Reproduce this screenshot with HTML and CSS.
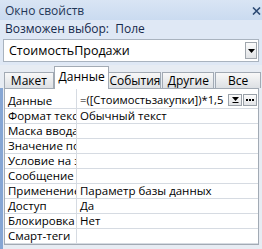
FILE: index.html
```html
<!DOCTYPE html>
<html lang="ru">
<head>
    <meta charset="UTF-8">
    <title>Окно свойств</title>
    <link rel="stylesheet" href="styles.css">
</head>
<body>
    <div class="titlebar">
        <span>Окно свойств</span>
        <svg class="close" width="9" height="8" viewBox="0 0 9 8">
            <path d="M1 0.5 L8 7.5 M8 0.5 L1 7.5" stroke="#2c4a74" stroke-width="1.6"/>
        </svg>
    </div>
    <div class="selection">Возможен выбор:&nbsp; Поле</div>
    <div class="combo">
        <span class="combo-text">СтоимостьПродажи</span>
        <span class="combo-btn">
            <svg width="7" height="4" viewBox="0 0 7 4"><path d="M0 0 H7 L3.5 4 Z" fill="#000"/></svg>
        </span>
    </div>
    <div class="tabs">
        <div class="tab tab-layout">Макет</div>
        <div class="tab tab-data active">Данные</div>
        <div class="tab tab-events">События</div>
        <div class="tab tab-other">Другие</div>
        <div class="tab tab-all">Все</div>
    </div>
    <div class="sheet">
        <div class="grid">
            <div class="row first">
                <div class="label">Данные</div>
                <div class="value">
                    <span class="value-text">=([Стоимостьзакупки])*1,5</span>
                    <span class="mini-btn">
                        <svg width="7" height="6" viewBox="0 0 7 6"><path d="M0 0 H7 L3.5 4 Z" fill="#000"/><rect x="0.5" y="5" width="6" height="1" fill="#000"/></svg>
                    </span>
                    <span class="mini-btn">
                        <svg width="8" height="2" viewBox="0 0 8 2"><rect x="0" y="0" width="2" height="2" fill="#000"/><rect x="3" y="0" width="2" height="2" fill="#000"/><rect x="6" y="0" width="2" height="2" fill="#000"/></svg>
                    </span>
                </div>
            </div>
            <div class="row"><div class="label">Формат текста</div><div class="value">Обычный текст</div></div>
            <div class="row"><div class="label">Маска ввода</div><div class="value"></div></div>
            <div class="row"><div class="label">Значение по умолчанию</div><div class="value"></div></div>
            <div class="row"><div class="label">Условие на значение</div><div class="value"></div></div>
            <div class="row"><div class="label">Сообщение</div><div class="value"></div></div>
            <div class="row"><div class="label">Применение</div><div class="value">Параметр базы данных</div></div>
            <div class="row"><div class="label">Доступ</div><div class="value">Да</div></div>
            <div class="row"><div class="label">Блокировка</div><div class="value">Нет</div></div>
            <div class="row"><div class="label">Смарт-теги</div><div class="value"></div></div>
        </div>
    </div>
</body>
</html>
```

FILE: styles.css
```css
body {
    margin: 0;
    width: 262px;
    height: 249px;
    overflow: hidden;
    font-family: "Open Sans", "Noto Sans", sans-serif;
    font-size: 11.5px;
    color: #000;
    background-color: #dfe8f5;
}
.titlebar {
    height: 20px;
    display: flex;
    align-items: center;
    justify-content: space-between;
    padding: 0 1px 0 5px;
    background: linear-gradient(#d9e5f4, #cadbf0);
    color: #1f3656;
    font-size: 12px;
}
.close {
    margin-top: 2px;
}
.selection {
    height: 17px;
    line-height: 17px;
    padding-left: 5px;
    color: #15294b;
    font-size: 12px;
}
.combo {
    height: 21px;
    margin: 2px 3px 0 3px;
    display: flex;
    align-items: center;
    background-color: #fff;
    border: 1px solid #a9b3bf;
}
.combo-text {
    flex: 1;
    padding-left: 5px;
    font-size: 12.5px;
}
.combo-btn {
    width: 10px;
    height: 15px;
    margin-right: 1px;
    display: flex;
    align-items: center;
    justify-content: center;
    border: 1px solid #a0a6ad;
    background: linear-gradient(#fbfbfb, #e1e3e6);
}
.tabs {
    height: 23px;
    margin-top: 3px;
    padding-left: 4px;
    display: flex;
    align-items: flex-end;
    background-color: #e7ecf3;
}
.tab {
    height: 15px;
    display: flex;
    align-items: center;
    justify-content: center;
    margin-right: 1px;
    border: 1px solid #a2aab4;
    border-bottom: none;
    background: linear-gradient(#f8f8f8, #dde0e4);
    font-size: 12px;
}
.tab.active {
    height: 23px;
    align-items: flex-start;
    padding-top: 1px;
    box-sizing: border-box;
    margin-bottom: -1px;
    background: #fff;
    position: relative;
}
.tab-layout { width: 48px; }
.tab-data { width: 56px; margin-left: -1px; margin-right: 0; }
.tab-events { width: 51px; margin-left: -1px; }
.tab-other { width: 50px; }
.tab-all { width: 44px; }
.sheet {
    height: 161px;
    padding-left: 1px;
    border-left: 3px solid #86a6d4;
    background-color: #e7ecf3;
}
.grid {
    width: 253px;
    background-color: #fff;
    border: 1px solid #a2aab4;
}
.row {
    display: grid;
    grid-template-columns: 72px 1fr;
    height: 14px;
    line-height: 14px;
    border-bottom: 1px solid #d6dbe2;
}
.row.first {
    height: 19px;
    line-height: 16px;
}
.row.first .label {
    padding-top: 4px;
}
.label {
    padding-left: 3px;
    overflow: hidden;
    white-space: nowrap;
    border-right: 1px solid #d6dbe2;
}
.value {
    padding-left: 3px;
    display: flex;
    align-items: center;
    white-space: nowrap;
    overflow: hidden;
}
.row.first .value {
    padding-top: 3px;
}
.value-text {
    flex: 1;
    font-size: 11.2px;
}
.mini-btn {
    flex-shrink: 0;
    width: 12px;
    height: 10px;
    margin-right: 1px;
    display: flex;
    align-items: center;
    justify-content: center;
    border: 1px solid #9aa1a9;
    background: linear-gradient(#fbfbfb, #e2e4e7);
}
```
